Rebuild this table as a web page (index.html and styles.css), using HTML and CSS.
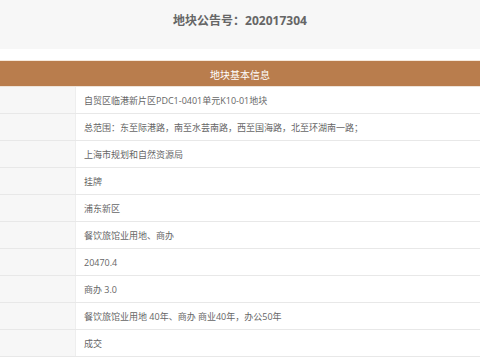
FILE: index.html
```html
<!DOCTYPE html>
<html lang="zh">
<head>
<meta charset="utf-8">
<link rel="stylesheet" href="styles.css">
</head>
<body>
<div class="top">
  <h1 class="title">地块公告号：202017304</h1>
</div>
<div class="gap"></div>
<div class="section-head">地块基本信息</div>
<div class="table">
  <div class="row"><div class="label"></div><div class="value">自贸区临港新片区PDC1-0401单元K10-01地块</div></div>
  <div class="row"><div class="label"></div><div class="value">总范围：东至际港路，南至水芸南路，西至国海路，北至环湖南一路；</div></div>
  <div class="row"><div class="label"></div><div class="value">上海市规划和自然资源局</div></div>
  <div class="row"><div class="label"></div><div class="value">挂牌</div></div>
  <div class="row"><div class="label"></div><div class="value">浦东新区</div></div>
  <div class="row"><div class="label"></div><div class="value">餐饮旅馆业用地、商办</div></div>
  <div class="row"><div class="label"></div><div class="value">20470.4</div></div>
  <div class="row"><div class="label"></div><div class="value">商办 3.0</div></div>
  <div class="row"><div class="label"></div><div class="value">餐饮旅馆业用地 40年、商办 商业40年，办公50年</div></div>
  <div class="row"><div class="label"></div><div class="value">成交</div></div>
</div>
</body>
</html>
```
FILE: styles.css
```css
* { box-sizing: border-box; }
html, body { margin: 0; padding: 0; background: #fff; }
body {
  font-family: "Open Sans", "Noto Sans CJK SC", sans-serif;
  color: #666;
  width: 480px;
  overflow: hidden;
}
.top {
  background: #f7f7f7;
  height: 49px;
  display: flex;
  align-items: center;
  justify-content: center;
}
.title {
  margin: 0;
  font-size: 12px;
  font-weight: bold;
  color: #666;
  padding-bottom: 9px;
}
.gap { height: 12px; border-bottom: 1px solid #f6e9dc; }
.section-head {
  height: 26px;
  background: #b97d4d;
  color: #fff;
  font-size: 10px;
  display: flex;
  align-items: center;
  justify-content: center;
  padding-top: 2px;
  border-bottom: 1px solid #eee4da;
}
.row {
  display: flex;
  height: 27px;
  border-bottom: 1px solid #e8e8e8;
}
.label {
  width: 76px;
  background: #f7f7f7;
  border-right: 1px solid #eeeeee;
}
.value {
  flex: 1;
  padding-left: 8px;
  font-size: 9px;
  display: flex;
  align-items: center;
  color: #666;
}
```
